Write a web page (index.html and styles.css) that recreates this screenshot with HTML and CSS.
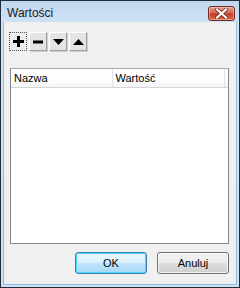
FILE: index.html
```html
<!DOCTYPE html>
<html lang="pl">
<head>
  <meta charset="UTF-8" />
  <title>Wartości</title>
  <link rel="stylesheet" href="styles.css">
</head>
<body>
  <div class="window">
    <div class="titlebar">
      <span class="title">Wartości</span>
      <div class="close">
        <svg width="13" height="11" viewBox="0 0 13 11">
          <path d="M2 1.5 L11 9.5 M11 1.5 L2 9.5" stroke="#6b1d12" stroke-width="3.6" stroke-linecap="square"/>
          <path d="M2 1.5 L11 9.5 M11 1.5 L2 9.5" stroke="#ffffff" stroke-width="2.2" stroke-linecap="square"/>
        </svg>
      </div>
    </div>

    <div class="client">
      <div class="toolbar">
        <button class="tool focus">
          <svg width="11" height="11" viewBox="0 0 11 11"><path d="M4 0h3v4h4v3h-4v4h-3v-4h-4v-3h4z" fill="#000"/></svg>
        </button>
        <button class="tool">
          <svg width="10" height="10" viewBox="0 0 10 10"><rect x="0" y="3.5" width="10" height="3" fill="#000"/></svg>
        </button>
        <button class="tool">
          <svg width="11" height="6" viewBox="0 0 11 6"><path d="M0 0h11l-5.5 6z" fill="#000"/></svg>
        </button>
        <button class="tool">
          <svg width="11" height="6" viewBox="0 0 11 6"><path d="M0 6h11l-5.5-6z" fill="#000"/></svg>
        </button>
      </div>

      <div class="listview">
        <div class="header">
          <div class="col name">Nazwa</div>
          <div class="col value">Wartość</div>
          <div class="col rest"></div>
        </div>
        <div class="rows"></div>
      </div>

      <div class="actions">
        <button class="btn default">OK</button>
        <button class="btn">Anuluj</button>
      </div>
    </div>
  </div>
</body>
</html>
```

FILE: styles.css
```css
body {
  margin: 0;
  font-family: 'Liberation Sans', Arial, sans-serif;
  font-size: 11px;
  color: #000;
}

.window {
  width: 240px;
  height: 288px;
  box-sizing: border-box;
  border: 1px solid #1f2d3c;
  background: linear-gradient(#c1d7f0, #cfe1f5 22px, #cfe0f4);
  display: flex;
  flex-direction: column;
}

.titlebar {
  height: 21px;
  display: flex;
  align-items: center;
  justify-content: space-between;
  padding: 0 4px 0 6px;
}

.title {
  font-size: 12px;
  color: #1a1a1a;
  padding-top: 2px;
}

.close {
  width: 25px;
  height: 13px;
  margin-top: 3px;
  border: 1px solid #6d2d22;
  border-radius: 3px;
  background: linear-gradient(#e9a294, #d2614c 48%, #c13b22 52%, #d86d4f);
  box-shadow: inset 0 0 0 1px rgba(255, 210, 200, 0.5);
  display: flex;
  align-items: center;
  justify-content: center;
}

.client {
  flex: 1;
  margin: 0 2px 2px 2px;
  background: #f0f0f0;
  border: 1px solid #8fbfe0;
  border-top: none;
  display: flex;
  flex-direction: column;
  padding: 0 7px 0 5px;
}

.toolbar {
  display: flex;
  gap: 2px;
  margin-top: 10px;
}

.tool {
  width: 18px;
  height: 19px;
  padding: 0;
  margin: 0;
  background: #e4e4e4;
  border: 1px solid;
  border-color: #ffffff #a0a0a0 #a0a0a0 #ffffff;
  box-shadow: 1px 1px 0 #d0d0d0;
  display: flex;
  align-items: center;
  justify-content: center;
}

.tool.focus {
  background: #ececec;
  border: 1px dotted #555;
  box-shadow: none;
}

.listview {
  margin-top: 17px;
  margin-left: 1px;
  height: 174px;
  border: 1px solid #828790;
  border-top-color: #a5a9ae;
  background: #fff;
  display: flex;
  flex-direction: column;
}

.header {
  height: 18px;
  display: flex;
  background: linear-gradient(#ffffff, #ffffff 50%, #f3f4f6);
  border-bottom: 1px solid #d5d5d5;
}

.col {
  line-height: 18px;
  padding-left: 3px;
  border-right: 1px solid #dfe3e8;
  box-sizing: border-box;
}

.col.name {
  width: 102px;
}

.col.value {
  width: 113px;
}

.col.rest {
  flex: 1;
  border-right: none;
}

.rows {
  flex: 1;
}

.actions {
  display: flex;
  justify-content: flex-end;
  gap: 10px;
  margin-top: 8px;
}

.btn {
  width: 72px;
  height: 22px;
  margin: 0;
  font-family: 'Liberation Sans', Arial, sans-serif;
  font-size: 11px;
  color: #000;
  border: 1px solid #707070;
  border-radius: 3px;
  background: linear-gradient(#f2f2f2, #ebebeb 50%, #dddddd 51%, #cfcfcf);
  box-shadow: inset 0 0 0 1px rgba(255, 255, 255, 0.7);
}

.btn.default {
  border-color: #3c7fb1;
  background: linear-gradient(#eaf6fd, #d9f0fc 50%, #bee6fd 51%, #a7d9f5);
  box-shadow: inset 0 0 0 1px #48d8fb;
}
```
